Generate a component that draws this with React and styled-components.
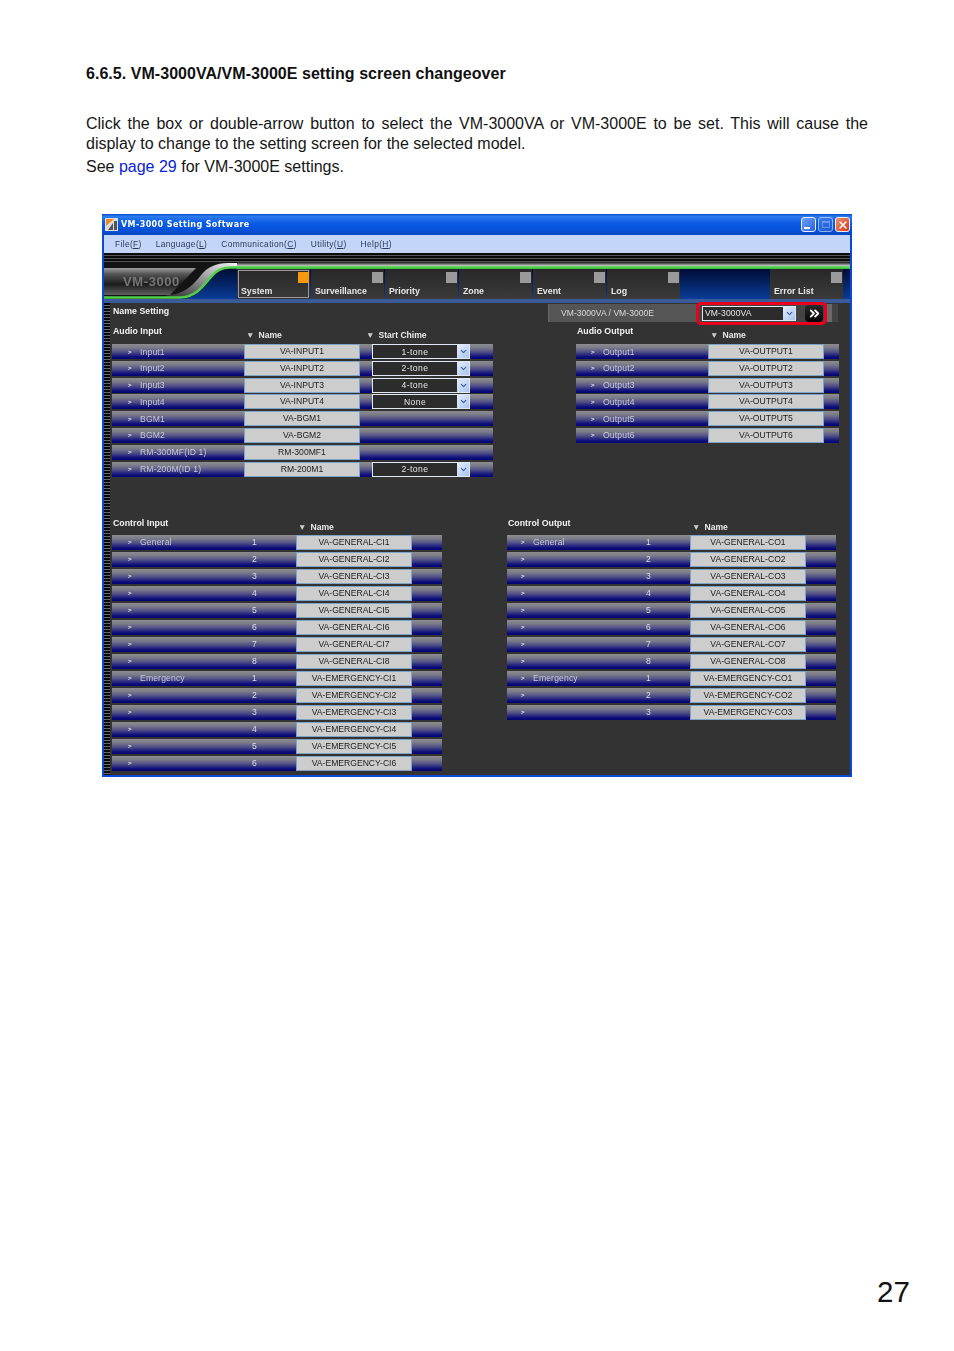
import React from 'react';
import styled, { createGlobalStyle } from 'styled-components';
import { ChevronDown, ChevronsRight, X } from 'lucide-react';

const Global = createGlobalStyle`
  html, body { margin: 0; padding: 0; background: #fff; }
  body { font-family: "Liberation Sans", Arial, sans-serif; }
`;

const Page = styled.div`
  width: 954px; height: 1351px; box-sizing: border-box; overflow: hidden;
  padding: 65px 0 0 86px; display: flex; flex-direction: column; color: #111;
`;
const Heading = styled.h1`
  margin: 0; font-size: 16px; line-height: 17px; font-weight: 700; width: 782px; letter-spacing: 0.04px;
`;
const Para = styled.p`
  margin: 32px 0 0; width: 782px; font-size: 16px; line-height: 19.5px; text-align: justify; color: #161616;
`;
const Note = styled.p`
  margin: 4px 0 0; font-size: 16px; line-height: 20px; color: #161616;
`;
const Link = styled.span` color: #0a22d8; `;

const Window = styled.div`
  width: 750px; height: 563px; margin: 37px 0 0 16px; box-sizing: border-box;
  border: 2px solid #0a48d8; border-top: 0; background: #333;
  display: flex; flex-direction: column; filter: blur(0.4px); color: #fff;
  font-size: 8.6px;
`;
const TitleBar = styled.div`
  height: 21px; flex: none; margin: 0 -2px; padding: 0 2px 0 3px; display: flex; align-items: center; gap: 3px;
  background: linear-gradient(#0a4fd0 0, #2a7af0 12%, #0a5ae4 45%, #0550d8 80%, #0a44b8 100%);
  border-radius: 2px 2px 0 0;
`;
const TitleText = styled.span`
  font: 700 8px "DejaVu Sans", sans-serif; letter-spacing: 0.4px; color: #fff; flex: 1;
`;
const WinBtn = styled.span`
  width: 15px; height: 15px; box-sizing: border-box; border: 1px solid #e8f0ff; border-radius: 3px;
  display: flex; align-items: center; justify-content: center; position: relative;
  background: ${p => p.$kind === 'close' ? 'linear-gradient(135deg,#f09070,#d83a14)' : p.$kind === 'max' ? 'linear-gradient(135deg,#4f86ea,#2a62d8)' : 'linear-gradient(135deg,#6f9ff5,#2a62e0)'};
  opacity: ${p => p.$kind === 'max' ? 0.6 : 1};
`;
const MinMark = styled.i` width: 6px; height: 2px; background: #fff; margin: 7px 4px 0 0; `;
const MaxMark = styled.i` width: 8px; height: 7px; border: 1px solid #9fc0f5; border-top-width: 2px; box-sizing: border-box; `;
const WinBtns = styled.div` display: flex; gap: 2px; `;

const MenuBar = styled.div`
  height: 18px; flex: none; padding-left: 11px; display: flex; align-items: center; gap: 14px;
  background: #c3d5f8; color: #2c3a58; font-size: 8.4px; letter-spacing: 0.36px;
`;
const Mn = styled.u` text-underline-offset: 1px; `;
const Stripes = styled.div`
  height: 9px; flex: none;
  background: repeating-linear-gradient(#0a0a0a 0 2px, #555 2px 3px);
`;

const Header = styled.div` display: flex; height: 37px; flex: none; `;
const LogoBox = styled.div` position: relative; width: 133px; flex: none; `;
const HeaderMain = styled.div` flex: 1; display: flex; flex-direction: column; min-width: 0; `;
const Silver = styled.div` height: 4px; flex: none; background: linear-gradient(#111, #d0d0d0); `;
const GreenLine = styled.div` height: 3px; flex: none; background: linear-gradient(#66e060, #39b83c); `;
const TabBar = styled.div`
  flex: 1; display: flex; gap: 1px; padding-right: 7px;
  background: linear-gradient(#000c36, #0a3c98);
`;
const Tab = styled.div`
  width: 73px; box-sizing: border-box; position: relative; margin-left: ${p => p.$push ? 'auto' : 0};
  background: linear-gradient(#282828, #3a3a3a); font-weight: 700; font-size: 8.8px;
  display: flex; align-items: flex-end; padding: 0 0 3px 4px; color: #e8e8e8;
  ${p => p.$on && 'box-shadow: inset 0 0 0 1px #333, inset 0 0 0 2px #9a9a9a;'}
`;
const TabFlag = styled.i`
  position: absolute; top: 3px; right: 1px; width: 11px; height: 11px;
  background: ${p => p.$on ? '#f59a10' : '#9a9a9a'};
`;
const BlueStrip = styled.div` height: 4px; flex: none; background: #3a5a98; `;

const Body = styled.div` flex: 1; display: flex; min-height: 0; `;
const Ladder = styled.div`
  width: 6px; flex: none;
  background: repeating-linear-gradient(#050505 0 2px, #6a6a6a 2px 3px);
`;
const Main = styled.div` flex: 1; padding-left: 2px; display: flex; flex-direction: column; min-width: 0; `;
const NameRow = styled.div`
  height: 20px; flex: none; display: flex; align-items: flex-start; justify-content: space-between; padding-right: 12px;
`;
const StrongLabel = styled.div`
  font-weight: 700; font-size: 8.8px; line-height: 10px; padding: ${p => p.$top || 3}px 0 0 1px; white-space: nowrap; color: #f2f2f2;
`;
const SelectorBar = styled.div`
  width: 290px; height: 18px; margin-top: 1px; display: flex; align-items: center; padding-left: 13px; box-sizing: border-box;
  background: linear-gradient(90deg, #6a6a6a 0, #555 2px, #555 279px, #6a6a6a 279px, #6a6a6a 284px, #444 284px); color: #d8d8d8; letter-spacing: 0;
`;
const BarText = styled.span` width: 135px; flex: none; white-space: nowrap; `;
const RedFrame = styled.div`
  width: 131px; height: 23px; flex: none; box-sizing: border-box; border: 3px solid #e8001c; border-radius: 5px;
  background: #444; display: flex; align-items: center; padding-left: 3px; gap: 9px;
`;
const Combo = styled.div`
  box-sizing: border-box; display: flex; align-items: stretch; height: ${p => p.$h || 15}px; width: ${p => p.$w}px;
  border: 1px solid #dfe8f4; background: #2c2c2c; color: #e4e4e4;
`;
const ComboText = styled.span`
  flex: 1; display: flex; align-items: center; justify-content: ${p => p.$left ? 'flex-start' : 'center'};
  padding-left: ${p => p.$left ? 2 : 0}px; letter-spacing: ${p => p.$left ? 0.1 : 0.4}px; white-space: nowrap;
`;
const ComboArrow = styled.span`
  width: 12px; flex: none; display: flex; align-items: center; justify-content: center;
  background: linear-gradient(135deg, #e4eefc, #a9c4f0); color: #3a5fa8;
`;
const ArrowBtn = styled.span`
  width: 18px; height: 17px; border-radius: 4px; background: linear-gradient(#2a2a2a, #050505); display: flex; align-items: center; justify-content: center; color: #fff;
`;

const Columns = styled.div` display: flex; align-items: flex-start; gap: ${p => p.$gap}px; margin-bottom: ${p => p.$mb || 0}px; `;
const Block = styled.div` width: ${p => p.$w}px; flex: none; `;
const BlockHead = styled.div`
  height: 21px; display: grid; grid-template-columns: ${p => p.$lead}px 116px 1fr;
`;
const ColHead = styled.div`
  font-weight: 700; font-size: 8.6px; line-height: 10px; padding: ${p => p.$top || 7}px 0 0 ${p => p.$pad || 2}px; white-space: nowrap; color: #e8e8e8;
`;
const Caret = styled.span` font-size: 8.5px; margin-right: 4px; color: #ccc; `;
const Rows = styled.div` display: flex; flex-direction: column; gap: ${p => p.$gap}px; `;
const Row = styled.div`
  height: 15px; display: grid; grid-template-columns: ${p => p.$lead}px 116px 1fr;
  background: linear-gradient(#8d8d8d 0, #7a7a8a 25%, #4c4c86 55%, #14147c 82%, #000070 100%);
`;
const Lead = styled.div`
  display: flex; align-items: center; padding-left: ${p => p.$pad}px; color: #c9c9d6; letter-spacing: 0.15px; white-space: nowrap;
`;
const Chevron = styled.span` width: 12px; flex: none; font-weight: 700; font-size: 6px; color: #eee; `;
const Label = styled.span` flex: 1; `;
const Num = styled.span` width: 44px; flex: none; color: #dcdce6; `;
const NameCell = styled.div`
  background: #cdcdcd; box-shadow: inset 0 0 0 1px #7da4c6; color: #1c1c1c; text-align: center; line-height: 15px;
  white-space: nowrap; letter-spacing: 0;
`;
const Extra = styled.div` padding-left: 12px; `;

const Logo = () => (
  <svg width="133" height="37" viewBox="0 0 133 37" style={{ display: 'block' }}>
    <defs>
      <linearGradient id="lg" x1="0" y1="0" x2="0" y2="1">
        <stop offset="0" stopColor="#a0a0a0" /><stop offset=".22" stopColor="#555" />
        <stop offset=".6" stopColor="#1c1c1c" /><stop offset="1" stopColor="#606060" />
      </linearGradient>
      <linearGradient id="nv" x1="0" y1="0" x2="0" y2="1">
        <stop offset="0" stopColor="#000c36" /><stop offset="1" stopColor="#0a3c98" />
      </linearGradient>
      <linearGradient id="sv" x1="0" y1="1" x2="1" y2="0">
        <stop offset="0" stopColor="#2a2a2a" /><stop offset=".55" stopColor="#9a9a9a" /><stop offset="1" stopColor="#f4f4f4" />
      </linearGradient>
    </defs>
    <rect width="133" height="37" fill="#141414" />
    <path d="M0 6 H92 L66 33 H0 Z" fill="url(#lg)" />
    <path d="M62 33.5 C82 32 90 22 98 12 C104 5 112 1 124 1 H133 V5.5 H126 C118 5.5 112 8 106 16 C98 26 90 35.5 76 35.5 H62 Z" fill="url(#sv)" />
    <path d="M76 37 C90 37 98 28 106 18 C112 10 118 7 126 7 H133 V37 Z" fill="url(#nv)" />
    <path d="M0 35.5 H76 C90 35.5 98 26 106 16 C112 8 118 5.5 126 5.5 H133" fill="none" stroke="#4fd04a" strokeWidth="2.6" />
    <text x="19" y="24" fontFamily="Liberation Sans, sans-serif" fontWeight="700" fontSize="13" letterSpacing="0.6" fill="#757575">VM-3000</text>
  </svg>
);

const AppIcon = () => (
  <svg width="13" height="13" viewBox="0 0 13 13" style={{ flex: 'none' }}>
    <rect width="13" height="13" fill="#dcdcdc" />
    <path d="M1 1 H9 L1 8 Z" fill="#f08a20" />
    <path d="M3 12 L8 5 V12 Z M9 3 H12 V12 H9 Z" fill="#555" />
  </svg>
);

const ChevDown = () => <ChevronDown size={9} strokeWidth={3} />;

const Tone = ({ children }) => (
  <Extra>
    <Combo $w={98}><ComboText>{children}</ComboText><ComboArrow><ChevDown /></ComboArrow></Combo>
  </Extra>
);

const DataRow = ({ lead, pad, label, num, name, tone }) => (
  <Row $lead={lead}>
    <Lead $pad={pad}>
      <Chevron>&gt;</Chevron>
      <Label>{label}</Label>
      {num != null && <Num>{num}</Num>}
    </Lead>
    <NameCell>{name}</NameCell>
    {tone ? <Tone>{tone}</Tone> : <div />}
  </Row>
);

const audioIn = [
  ['Input1', 'VA-INPUT1', '1-tone'], ['Input2', 'VA-INPUT2', '2-tone'], ['Input3', 'VA-INPUT3', '4-tone'],
  ['Input4', 'VA-INPUT4', 'None'], ['BGM1', 'VA-BGM1'], ['BGM2', 'VA-BGM2'],
  ['RM-300MF(ID 1)', 'RM-300MF1'], ['RM-200M(ID 1)', 'RM-200M1', '2-tone'],
];
const audioOut = [1, 2, 3, 4, 5, 6];
const control = (code, em) => {
  const g = Array.from({ length: 8 }, (_, i) => ({ label: i ? '' : 'General', num: i + 1, name: `VA-GENERAL-${code}${i + 1}` }));
  const e = Array.from({ length: em }, (_, i) => ({ label: i ? '' : 'Emergency', num: i + 1, name: `VA-EMERGENCY-${code}${i + 1}` }));
  return [...g, ...e];
};
const tabs = ['System', 'Surveillance', 'Priority', 'Zone', 'Event', 'Log'];

const PageNum = styled.div`
  margin: auto 0 0 791px; padding-bottom: 42px; font-size: 29.5px; line-height: 34px; color: #111;
`;

export default function App() {
  return (
    <Page>
      <Global />
      <Heading>6.6.5. VM-3000VA/VM-3000E setting screen changeover</Heading>
      <Para>Click the box or double-arrow button to select the VM-3000VA or VM-3000E to be set. This will cause the display to change to the setting screen for the selected model.</Para>
      <Note>See <Link>page 29</Link> for VM-3000E settings.</Note>
      <Window>
        <TitleBar>
          <AppIcon />
          <TitleText>VM-3000 Setting Software</TitleText>
          <WinBtns>
            <WinBtn $kind="min"><MinMark /></WinBtn>
            <WinBtn $kind="max"><MaxMark /></WinBtn>
            <WinBtn $kind="close"><X size={12} strokeWidth={3} color="#fff" /></WinBtn>
          </WinBtns>
        </TitleBar>
        <MenuBar>
          <span>File(<Mn>F</Mn>)</span>
          <span>Language(<Mn>L</Mn>)</span>
          <span>Communication(<Mn>C</Mn>)</span>
          <span>Utility(<Mn>U</Mn>)</span>
          <span>Help(<Mn>H</Mn>)</span>
        </MenuBar>
        <Stripes />
        <Header>
          <LogoBox><Logo /></LogoBox>
          <HeaderMain>
            <Silver />
            <GreenLine />
            <TabBar>
              {tabs.map((t, i) => <Tab key={t} $on={i === 0}>{t}<TabFlag $on={i === 0} /></Tab>)}
              <Tab $push>Error List<TabFlag /></Tab>
            </TabBar>
          </HeaderMain>
        </Header>
        <BlueStrip />
        <Body>
          <Ladder />
          <Main>
            <NameRow>
              <StrongLabel>Name Setting</StrongLabel>
              <SelectorBar>
                <BarText>VM-3000VA / VM-3000E</BarText>
                <RedFrame>
                  <Combo $w={94} $h={15}><ComboText $left>VM-3000VA</ComboText><ComboArrow><ChevDown /></ComboArrow></Combo>
                  <ArrowBtn><ChevronsRight size={15} strokeWidth={3} /></ArrowBtn>
                </RedFrame>
              </SelectorBar>
            </NameRow>
            <Columns $gap={83} $mb={37}>
              <Block $w={381}>
                <BlockHead $lead={132}>
                  <StrongLabel>Audio Input</StrongLabel>
                  <ColHead><Caret>▼</Caret>Name</ColHead>
                  <ColHead $pad={6}><Caret>▼</Caret>Start Chime</ColHead>
                </BlockHead>
                <Rows $gap={1.8}>
                  {audioIn.map(([l, n, t]) => <DataRow key={l} lead={132} pad={16} label={l} name={n} tone={t} />)}
                </Rows>
              </Block>
              <Block $w={263}>
                <BlockHead $lead={132}>
                  <StrongLabel>Audio Output</StrongLabel>
                  <ColHead><Caret>▼</Caret>Name</ColHead>
                </BlockHead>
                <Rows $gap={1.8}>
                  {audioOut.map(i => <DataRow key={i} lead={132} pad={15} label={`Output${i}`} name={`VA-OUTPUT${i}`} />)}
                </Rows>
              </Block>
            </Columns>
            <Columns $gap={65}>
              <Block $w={330}>
                <BlockHead $lead={184}>
                  <StrongLabel $top={4}>Control Input</StrongLabel>
                  <ColHead $top={8}><Caret>▼</Caret>Name</ColHead>
                </BlockHead>
                <Rows $gap={2}>
                  {control('CI', 6).map(r => <DataRow key={r.name} lead={184} pad={16} {...r} />)}
                </Rows>
              </Block>
              <Block $w={329}>
                <BlockHead $lead={183}>
                  <StrongLabel $top={4}>Control Output</StrongLabel>
                  <ColHead $top={8}><Caret>▼</Caret>Name</ColHead>
                </BlockHead>
                <Rows $gap={2}>
                  {control('CO', 3).map(r => <DataRow key={r.name} lead={183} pad={14} {...r} />)}
                </Rows>
              </Block>
            </Columns>
          </Main>
        </Body>
      </Window>
      <PageNum>27</PageNum>
    </Page>
  );
}
